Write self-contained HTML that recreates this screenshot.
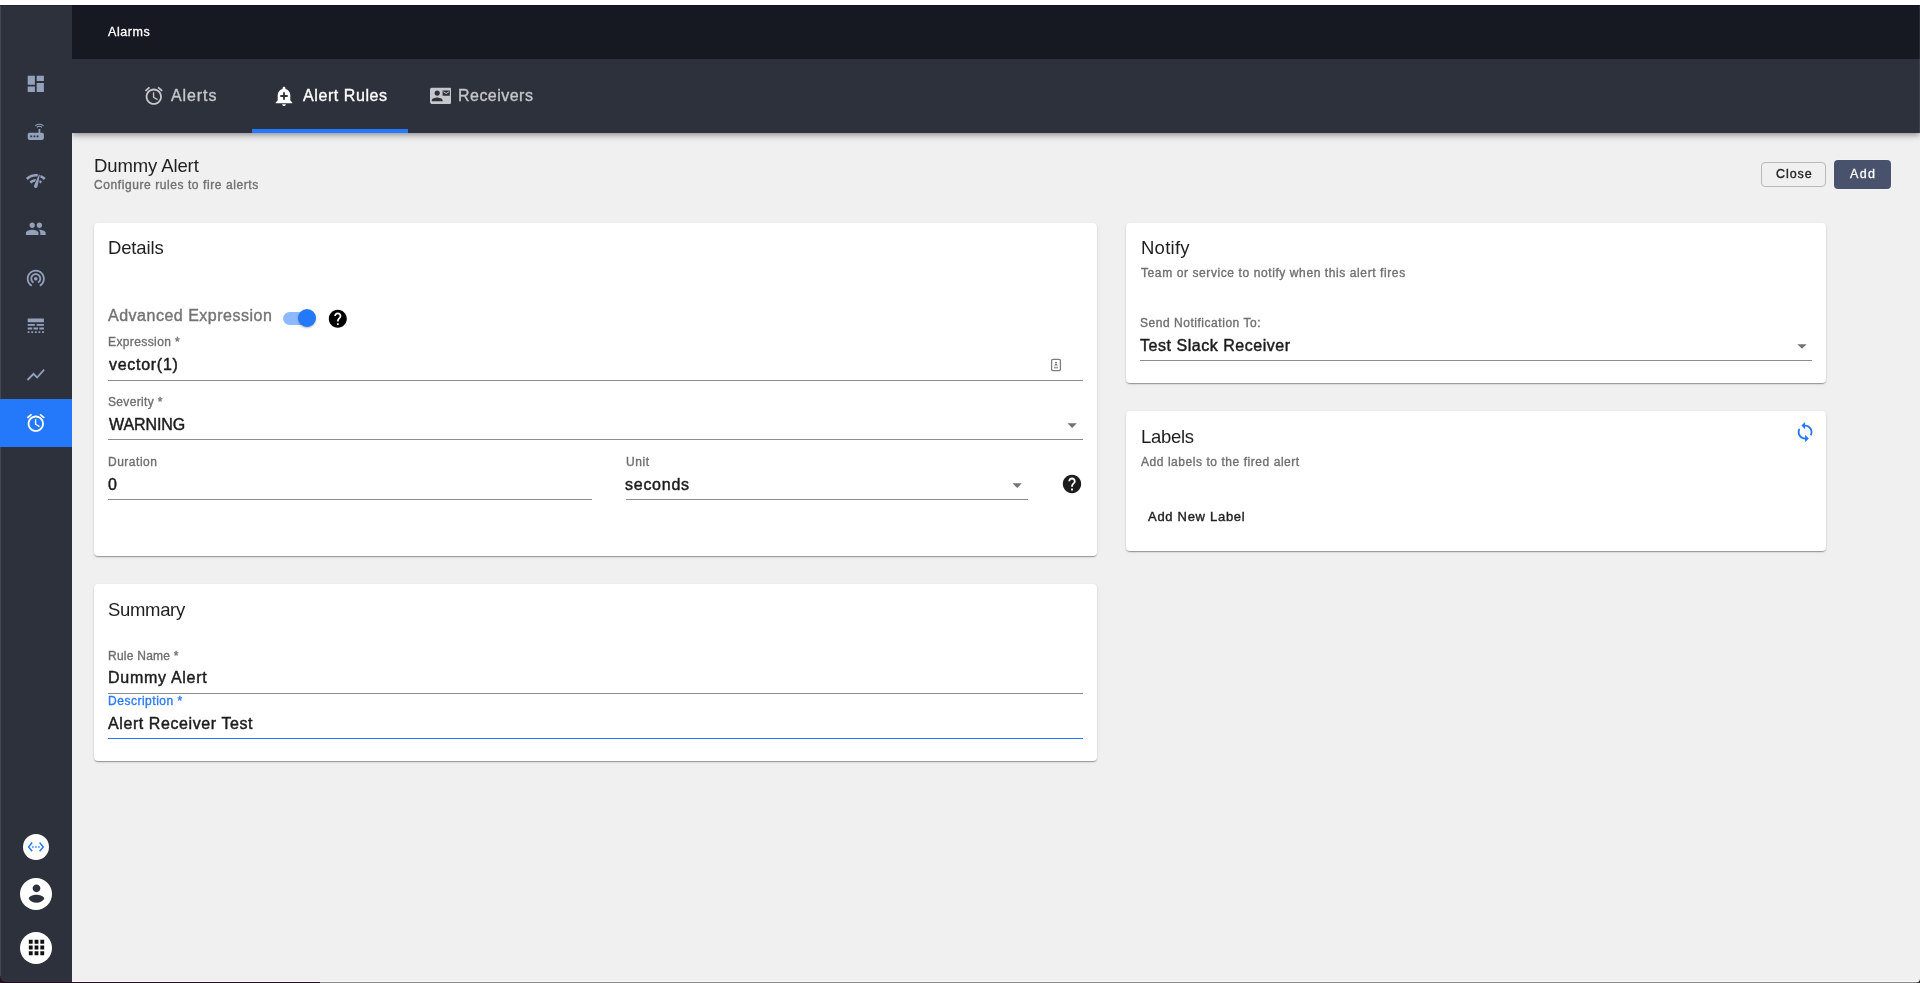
<!DOCTYPE html>
<html lang="en"><head><meta charset="utf-8"><title>Alarms</title>
<style>
html,body{margin:0;padding:0}
body{width:1920px;height:983px;overflow:hidden;position:relative;background:#f0f0f0;font-family:"Liberation Sans",sans-serif}
.a{position:absolute}
.ic{position:absolute;display:block}
.t{position:absolute;white-space:pre;will-change:transform;margin:0;padding:0;font-weight:400;display:block}
.card{position:absolute;background:#fff;border-radius:4px;box-shadow:0 2px 1px -1px rgba(0,0,0,.2),0 1px 1px 0 rgba(0,0,0,.14),0 1px 3px 0 rgba(0,0,0,.12)}
.ul{position:absolute;height:1px;background:#8c8c8c}
.circ{position:absolute;border-radius:50%;background:#fff}
</style></head><body>

<header>
<div class="a" style="left:0;top:0;width:1920px;height:5px;background:#fff"></div>
<div class="a" style="left:72px;top:59px;width:1848px;height:74px;background:#2d313c;box-shadow:0 2px 4px -1px rgba(0,0,0,.2),0 4px 5px 0 rgba(0,0,0,.14),0 1px 10px 0 rgba(0,0,0,.12)"></div>
<div class="a" style="left:72px;top:5px;width:1848px;height:54px;background:#161922"></div>
<div class="a" style="left:252px;top:129px;width:156px;height:4px;background:#2479fb"></div>
<svg class="ic" style="left:142.60px;top:85.30px;width:21.6px;height:21.6px;" viewBox="0 0 24 24"><path fill="#c6c7ca" d="M22 5.720l-4.600-3.860-1.290 1.530 4.600 3.860L22 5.720zM7.880 3.390L6.600 1.860 2 5.710l1.290 1.530 4.590-3.850zM12.500 8H11v6l4.750 2.850.750-1.230-4-2.370V8zM12 4c-4.970 0-9 4.030-9 9s4.020 9 9 9c4.970 0 9-4.030 9-9s-4.030-9-9-9zm0 16c-3.870 0-7-3.130-7-7s3.130-7 7-7 7 3.130 7 7-3.130 7-7 7z"/></svg>
<svg class="ic" style="left:273.30px;top:85.40px;width:22px;height:22px;" viewBox="0 0 24 24"><path fill="#ffffff" d="M10.010 21.010c0 1.100.890 1.990 1.990 1.990s1.990-.890 1.990-1.990h-3.980zm8.870-4.190V11c0-3.250-2.250-5.970-5.290-6.690v-.720C13.590 2.710 12.880 2 12 2s-1.590.710-1.590 1.590v.720C7.370 5.030 5.120 7.750 5.120 11v5.820L3 18.940V20h18v-1.060l-2.120-2.120zM16 13.010h-3v3h-2v-3H8V11h3V8h2v3h3v2.010z"/></svg>
<svg class="ic" style="left:429.60px;top:85.20px;width:21.6px;height:21.6px;" viewBox="0 0 24 24"><path fill="#c6c7ca" d="M21 8V7l-3 2-3-2v1l3 2 3-2zm1-5H2C.900 3 0 3.900 0 5v14c0 1.100.900 2 2 2h20c1.100 0 1.990-.900 1.990-2L24 5c0-1.100-.900-2-2-2zM8 6c1.660 0 3 1.340 3 3s-1.340 3-3 3-3-1.340-3-3 1.340-3 3-3zm6 12H2v-1c0-2 4-3.100 6-3.100s6 1.100 6 3.100v1zm8-6h-8V6h8v6z"/></svg>
<span class="t" style="left:107.8px;top:26.42px;font-size:12.5px;line-height:12.5px;letter-spacing:0.575px;color:#ffffff;-webkit-text-stroke:0.3px #ffffff;">Alarms</span>
<span class="t" style="left:171.24px;top:87.56px;font-size:16.0px;line-height:16.0px;letter-spacing:0.91px;color:#c6c7ca;-webkit-text-stroke:0.35px #c6c7ca;">Alerts</span>
<span class="t" style="left:302.54px;top:87.56px;font-size:16.0px;line-height:16.0px;letter-spacing:0.584px;color:#ffffff;-webkit-text-stroke:0.35px #ffffff;">Alert Rules</span>
<span class="t" style="left:458.18px;top:87.56px;font-size:16.0px;line-height:16.0px;letter-spacing:0.472px;color:#c6c7ca;-webkit-text-stroke:0.35px #c6c7ca;">Receivers</span>
</header>
<nav>
<div class="a" style="left:0;top:972px;width:10px;height:11px;background:#2a0c20"></div>
<div class="a" style="left:0;top:5px;width:72px;height:977px;background:#2d313c;border-bottom-left-radius:6px"></div>
<div class="a" style="left:0;top:6px;width:1px;height:970px;background:#434655"></div>
<div class="a" style="left:0;top:399px;width:72px;height:48.4px;background:#2479fb"></div>
<svg class="ic" style="left:25.20px;top:72.50px;width:21.6px;height:21.6px;" viewBox="0 0 24 24"><path fill="#93a1bb" d="M3 13h8V3H3v10zm0 8h8v-6H3v6zm10 0h8V11h-8v10zm0-18v6h8V3h-8z"/></svg>
<svg class="ic" style="left:25.20px;top:121.05px;width:21.6px;height:21.6px;" viewBox="0 0 24 24"><path fill="#93a1bb" d="M20.2 5.9l.8-.8C19.6 3.700 17.8 3 16 3s-3.600.700-5 2.100l.8.8C13 4.800 14.500 4.200 16 4.200s3 .600 4.200 1.700zm-.900.800c-.900-.900-2.100-1.400-3.300-1.400s-2.400.500-3.300 1.400l.800.800c.700-.700 1.600-1 2.500-1 .900 0 1.800.300 2.500 1l.800-.800zM19 13h-2V9h-2v4H5c-1.100 0-2 .900-2 2v4c0 1.100.900 2 2 2h14c1.100 0 2-.900 2-2v-4c0-1.100-.900-2-2-2zM8 18H6v-2h2v2zm3.500 0h-2v-2h2v2zm3.500 0h-2v-2h2v2z"/></svg>
<svg class="ic" style="left:25.20px;top:169.80px;width:21.6px;height:21.6px;" viewBox="0 0 24 24"><path fill="#93a1bb" d="M15.900 5c-.170 0-.320.090-.410.230l-.070.150-5.180 11.650c-.160.290-.260.610-.260.960 0 1.110.900 2.010 2.010 2.010.960 0 1.770-.680 1.960-1.590l.010-.030L16.400 5.500c0-.280-.220-.500-.500-.500zM1 9l2 2c2.880-2.880 6.790-4.080 10.530-3.620l1.190-2.680C9.890 3.840 4.740 5.270 1 9zm20 2l2-2c-1.640-1.640-3.550-2.820-5.590-3.570l-.530 2.820c1.500.620 2.900 1.530 4.120 2.750zm-4 4l2-2c-.800-.800-1.700-1.420-2.660-1.890l-.550 2.920c.420.270.830.590 1.210.970zM5 13l2 2c1.130-1.130 2.560-1.790 4.030-2l1.280-2.880c-2.630-.080-5.300.870-7.310 2.880z"/></svg>
<svg class="ic" style="left:25.20px;top:218.30px;width:21.6px;height:21.6px;" viewBox="0 0 24 24"><path fill="#93a1bb" d="M16 11c1.660 0 2.990-1.340 2.990-3S17.660 5 16 5c-1.660 0-3 1.340-3 3s1.340 3 3 3zm-8 0c1.660 0 2.990-1.340 2.990-3S9.660 5 8 5C6.340 5 5 6.340 5 8s1.340 3 3 3zm0 2c-2.330 0-7 1.170-7 3.500V19h14v-2.500c0-2.330-4.670-3.500-7-3.500zm8 0c-.290 0-.620.020-.970.050 1.160.840 1.970 1.970 1.970 3.450V19h6v-2.500c0-2.330-4.670-3.500-7-3.500z"/></svg>
<svg class="ic" style="left:25.20px;top:266.70px;width:21.6px;height:21.6px;" viewBox="0 0 24 24"><path fill="#93a1bb" d="M12 11c-1.100 0-2 .900-2 2s.900 2 2 2 2-.900 2-2-.900-2-2-2zm6 2c0-3.310-2.690-6-6-6s-6 2.690-6 6c0 2.220 1.210 4.150 3 5.190l1-1.740c-1.190-.700-2-1.970-2-3.450 0-2.210 1.790-4 4-4s4 1.790 4 4c0 1.480-.810 2.750-2 3.450l1 1.740c1.790-1.040 3-2.970 3-5.190zM12 3C6.480 3 2 7.480 2 13c0 3.700 2.010 6.920 4.990 8.650l1-1.730C5.610 18.530 4 15.960 4 13c0-4.420 3.580-8 8-8s8 3.580 8 8c0 2.960-1.610 5.530-4 6.920l1 1.730c2.990-1.730 5-4.950 5-8.650 0-5.520-4.480-10-10-10z"/></svg>
<svg class="ic" style="left:25.20px;top:315.25px;width:21.6px;height:21.6px;" viewBox="0 0 24 24"><path fill="#93a1bb" d="M3 16h5v-2H3v2zm6.500 0h5v-2h-5v2zm6.500 0h5v-2h-5v2zM3 20h2v-2H3v2zm4 0h2v-2H7v2zm4 0h2v-2h-2v2zm4 0h2v-2h-2v2zm4 0h2v-2h-2v2zM3 12h8v-2H3v2zm10 0h8v-2h-8v2zM3 4v4h18V4H3z"/></svg>
<svg class="ic" style="left:25.20px;top:364.20px;width:21.6px;height:21.6px;" viewBox="0 0 24 24"><path fill="#93a1bb" d="M3.500 18.490l6-6.010 4 4L22 6.920l-1.410-1.410-7.090 7.970-4-4L2 16.990z"/></svg>
<svg class="ic" style="left:25.20px;top:412.35px;width:21.6px;height:21.6px;" viewBox="0 0 24 24"><path fill="#ffffff" d="M22 5.720l-4.600-3.860-1.290 1.530 4.600 3.860L22 5.720zM7.880 3.390L6.600 1.860 2 5.710l1.290 1.530 4.590-3.850zM12.500 8H11v6l4.750 2.850.750-1.230-4-2.370V8zM12 4c-4.970 0-9 4.030-9 9s4.020 9 9 9c4.970 0 9-4.030 9-9s-4.030-9-9-9zm0 16c-3.870 0-7-3.130-7-7s3.130-7 7-7 7 3.130 7 7-3.130 7-7 7z"/></svg>
<div class="circ" style="left:22.9px;top:833.7px;width:26.3px;height:26.3px"></div>
<svg class="ic" style="left:27.15px;top:838.00px;width:17.8px;height:17.8px;" viewBox="0 0 24 24"><path fill="#2479fb" d="M7.770 6.760L6.230 5.480.820 12l5.410 6.520 1.540-1.280L3.420 12l4.350-5.240zM7 13h2v-2H7v2zm10-2h-2v2h2v-2zm-6 2h2v-2h-2v2zm6.770-7.520l-1.540 1.280L20.580 12l-4.350 5.240 1.540 1.280L23.180 12l-5.410-6.520z"/></svg>
<div class="circ" style="left:19.8px;top:877.7px;width:32.4px;height:32.4px"></div>
<svg class="ic" style="left:20.55px;top:877.90px;width:31px;height:31px;" viewBox="0 0 24 24"><path fill="#2d313c" d="M12 5c1.660 0 3 1.340 3 3s-1.340 3-3 3-3-1.340-3-3 1.340-3 3-3zm0 14.200c-2.500 0-4.710-1.280-6-3.220.030-1.990 4-3.080 6-3.080 1.990 0 5.970 1.090 6 3.080-1.290 1.940-3.500 3.220-6 3.220z"/></svg>
<div class="circ" style="left:19.8px;top:931.7px;width:32.4px;height:32.4px"></div>
<svg class="ic" style="left:24.50px;top:936.30px;width:23px;height:23px;" viewBox="0 0 24 24"><path fill="#111111" d="M4 8h4V4H4v4zm6 12h4v-4h-4v4zm-6 0h4v-4H4v4zm0-6h4v-4H4v4zm6 0h4v-4h-4v4zm6-10v4h4V4h-4zm-6 4h4V4h-4v4zm6 6h4v-4h-4v4zm0 6h4v-4h-4v4z"/></svg>
</nav>
<main>
<div class="a" style="left:1761px;top:162px;width:63px;height:23px;border:1px solid #b9b9b9;border-radius:4px"></div>
<div class="a" style="left:1834px;top:160px;width:57px;height:29px;border-radius:4px;background:#48526c;box-shadow:0 0 2px rgba(255,255,255,.9)"></div>
<div class="card" style="left:94px;top:223px;width:1003px;height:333px"></div>
<div class="card" style="left:94px;top:584px;width:1003px;height:177px"></div>
<div class="card" style="left:1126px;top:223px;width:700px;height:160px"></div>
<div class="card" style="left:1126px;top:411px;width:700px;height:140px"></div>
<div class="ul" style="left:108px;top:380px;width:975px"></div>
<div class="ul" style="left:108px;top:439px;width:975px"></div>
<div class="ul" style="left:108px;top:499px;width:484px"></div>
<div class="ul" style="left:626px;top:499px;width:402px"></div>
<div class="ul" style="left:1140px;top:360px;width:672px"></div>
<div class="ul" style="left:108px;top:693px;width:975px"></div>
<div class="ul" style="left:108px;top:738px;width:975px;background:#2479fb;height:1.4px"></div>
<div class="a" style="left:283px;top:311.5px;width:31.4px;height:13px;border-radius:6.5px;background:#8fb9fd"></div>
<div class="a" style="left:297.7px;top:308.6px;width:18.5px;height:18.5px;border-radius:50%;background:#2479fb;box-shadow:0 1px 2px rgba(0,0,0,.3)"></div>
<svg class="ic" style="left:327.20px;top:308.00px;width:21.6px;height:21.6px;" viewBox="0 0 24 24"><path fill="#000000" d="M12 2C6.480 2 2 6.480 2 12s4.480 10 10 10 10-4.480 10-10S17.520 2 12 2zm1 17h-2v-2h2v2zm2.070-7.750l-.900.920C13.450 12.900 13 13.500 13 15h-2v-.500c0-1.100.450-2.100 1.170-2.830l1.240-1.260c.370-.360.590-.860.590-1.410 0-1.100-.900-2-2-2s-2 .900-2 2H8c0-2.210 1.790-4 4-4s4 1.790 4 4c0 .880-.360 1.680-.930 2.250z"/></svg>
<svg class="ic" style="left:1060.90px;top:473.20px;width:22px;height:22px;" viewBox="0 0 24 24"><path fill="#1c1c1c" d="M12 2C6.480 2 2 6.480 2 12s4.480 10 10 10 10-4.480 10-10S17.520 2 12 2zm1 17h-2v-2h2v2zm2.070-7.750l-.900.920C13.450 12.900 13 13.500 13 15h-2v-.500c0-1.100.450-2.100 1.170-2.830l1.240-1.260c.370-.360.590-.860.590-1.410 0-1.100-.900-2-2-2s-2 .900-2 2H8c0-2.210 1.790-4 4-4s4 1.790 4 4c0 .880-.360 1.680-.930 2.250z"/></svg>
<svg class="ic" style="left:1060.65px;top:414.15px;width:22.3px;height:22.3px;" viewBox="0 0 24 24"><path fill="#737373" d="M7 10l5 5 5-5z"/></svg>
<svg class="ic" style="left:1005.65px;top:474.05px;width:22.3px;height:22.3px;" viewBox="0 0 24 24"><path fill="#737373" d="M7 10l5 5 5-5z"/></svg>
<svg class="ic" style="left:1790.90px;top:334.80px;width:22px;height:22px;" viewBox="0 0 24 24"><path fill="#737373" d="M7 10l5 5 5-5z"/></svg>
<svg class="ic" style="left:1794.45px;top:420.60px;width:22.2px;height:22.2px;" viewBox="0 0 24 24"><path fill="#2479fb" d="M12 4V1L8 5l4 4V6c3.310 0 6 2.690 6 6 0 1.010-.250 1.970-.700 2.800l1.460 1.460C19.540 15.030 20 13.570 20 12c0-4.420-3.580-8-8-8zm0 14c-3.310 0-6-2.690-6-6 0-1.010.250-1.970.700-2.800L5.240 7.740C4.460 8.970 4 10.430 4 12c0 4.420 3.580 8 8 8v3l4-4-4-4v3z"/></svg>
<svg class="ic" style="left:1050px;top:358px;width:12px;height:14px" viewBox="0 0 12 14"><rect x="1.6" y="1.4" width="8.8" height="11.2" rx="1.4" fill="none" stroke="#7d7d7d" stroke-width="1.3"/><circle cx="6" cy="4.7" r="1" fill="#7d7d7d"/><path d="M4.3 7.6c0-1 .8-1.600 1.700-1.600s1.700.600 1.700 1.600z" fill="#7d7d7d"/><rect x="4.100" y="8.800" width="3.800" height="1.600" fill="#9a9a9a"/></svg>
<h1 class="t" style="left:93.96px;top:157.34px;font-size:18.5px;line-height:18.5px;letter-spacing:-0.11px;color:#1f1f1f;">Dummy Alert</h1>
<p class="t" style="left:93.71px;top:179.04px;font-size:12.0px;line-height:12.0px;letter-spacing:0.577px;color:#6f6f6f;-webkit-text-stroke:0.35px #6f6f6f;">Configure rules to fire alerts</p>
<span class="t" style="left:1776.28px;top:168.17px;font-size:12.5px;line-height:12.5px;letter-spacing:0.942px;color:#222222;-webkit-text-stroke:0.35px #222222;">Close</span>
<span class="t" style="left:1849.8px;top:168.17px;font-size:12.5px;line-height:12.5px;letter-spacing:1.376px;color:#ffffff;-webkit-text-stroke:0.3px #ffffff;">Add</span>
<h2 class="t" style="left:108.06px;top:239.44px;font-size:18.5px;line-height:18.5px;letter-spacing:-0.141px;color:#1f1f1f;">Details</h2>
<label class="t" style="left:108.24px;top:308.16px;font-size:16.0px;line-height:16.0px;letter-spacing:0.504px;color:#747474;-webkit-text-stroke:0.4px #747474;">Advanced Expression</label>
<label class="t" style="left:107.65px;top:336.04px;font-size:12.0px;line-height:12.0px;letter-spacing:0.394px;color:#6f6f6f;-webkit-text-stroke:0.35px #6f6f6f;">Expression *</label>
<span class="t" style="left:108.54px;top:356.96px;font-size:16.0px;line-height:16.0px;letter-spacing:0.714px;color:#1c1c1c;-webkit-text-stroke:0.45px #1c1c1c;">vector(1)</span>
<label class="t" style="left:107.72px;top:396.04px;font-size:12.0px;line-height:12.0px;letter-spacing:0.329px;color:#6f6f6f;-webkit-text-stroke:0.35px #6f6f6f;">Severity *</label>
<span class="t" style="left:108.56px;top:417.36px;font-size:16.0px;line-height:16.0px;letter-spacing:-0.095px;color:#1c1c1c;-webkit-text-stroke:0.45px #1c1c1c;">WARNING</span>
<label class="t" style="left:107.65px;top:455.94px;font-size:12.0px;line-height:12.0px;letter-spacing:0.511px;color:#6f6f6f;-webkit-text-stroke:0.35px #6f6f6f;">Duration</label>
<span class="t" style="left:108.45px;top:477.06px;font-size:16.0px;line-height:16.0px;letter-spacing:0.0px;color:#1c1c1c;-webkit-text-stroke:0.45px #1c1c1c;">0</span>
<label class="t" style="left:625.5px;top:455.94px;font-size:12.0px;line-height:12.0px;letter-spacing:0.615px;color:#6f6f6f;-webkit-text-stroke:0.35px #6f6f6f;">Unit</label>
<span class="t" style="left:625.48px;top:477.36px;font-size:16.0px;line-height:16.0px;letter-spacing:0.74px;color:#1c1c1c;-webkit-text-stroke:0.45px #1c1c1c;">seconds</span>
<h2 class="t" style="left:1140.76px;top:239.34px;font-size:18.5px;line-height:18.5px;letter-spacing:0.264px;color:#1f1f1f;">Notify</h2>
<p class="t" style="left:1140.74px;top:266.74px;font-size:12.0px;line-height:12.0px;letter-spacing:0.595px;color:#6f6f6f;-webkit-text-stroke:0.35px #6f6f6f;">Team or service to notify when this alert fires</p>
<label class="t" style="left:1139.82px;top:316.84px;font-size:12.0px;line-height:12.0px;letter-spacing:0.534px;color:#6f6f6f;-webkit-text-stroke:0.35px #6f6f6f;">Send Notification To:</label>
<span class="t" style="left:1140.27px;top:338.26px;font-size:16.0px;line-height:16.0px;letter-spacing:0.532px;color:#1c1c1c;-webkit-text-stroke:0.45px #1c1c1c;">Test Slack Receiver</span>
<h2 class="t" style="left:1140.86px;top:428.44px;font-size:18.5px;line-height:18.5px;letter-spacing:-0.29px;color:#1f1f1f;">Labels</h2>
<p class="t" style="left:1140.82px;top:455.94px;font-size:12.0px;line-height:12.0px;letter-spacing:0.552px;color:#6f6f6f;-webkit-text-stroke:0.35px #6f6f6f;">Add labels to the fired alert</p>
<span class="t" style="left:1147.82px;top:509.9px;font-size:13.0px;line-height:13.0px;letter-spacing:0.708px;color:#1f1f1f;-webkit-text-stroke:0.4px #1f1f1f;">Add New Label</span>
<h2 class="t" style="left:108.09px;top:601.39px;font-size:18.5px;line-height:18.5px;letter-spacing:-0.327px;color:#1f1f1f;">Summary</h2>
<label class="t" style="left:107.75px;top:649.94px;font-size:12.0px;line-height:12.0px;letter-spacing:0.251px;color:#6f6f6f;-webkit-text-stroke:0.35px #6f6f6f;">Rule Name *</label>
<span class="t" style="left:108.01px;top:669.56px;font-size:16.0px;line-height:16.0px;letter-spacing:0.711px;color:#1c1c1c;-webkit-text-stroke:0.45px #1c1c1c;">Dummy Alert</span>
<label class="t" style="left:107.75px;top:695.04px;font-size:12.0px;line-height:12.0px;letter-spacing:0.52px;color:#2a7bf6;-webkit-text-stroke:0.35px #2a7bf6;">Description *</label>
<span class="t" style="left:108.36px;top:715.66px;font-size:16.0px;line-height:16.0px;letter-spacing:0.584px;color:#1c1c1c;-webkit-text-stroke:0.45px #1c1c1c;">Alert Receiver Test</span>
</main>
<div class="a" style="left:1919px;top:5px;width:1px;height:128px;background:rgba(255,255,255,.09)"></div>
<div class="a" style="left:0;top:5px;width:1920px;height:1px;background:rgba(0,0,0,.2)"></div>
<div class="a" style="left:72px;top:981px;width:1848px;height:1px;background:#fbfbfb"></div>
<div class="a" style="left:0;top:982px;width:320px;height:1px;background:#2a0c20"></div>
<div class="a" style="left:320px;top:982px;width:1600px;height:1px;background:#8a8a8a"></div>
<svg class="ic" style="left:1914px;top:977px;width:6px;height:6px" viewBox="0 0 6 6"><path d="M6 1.500V6H1.500A4.500 4.500 0 0 0 6 1.500z" fill="#2b2b2b"/></svg>
</body></html>
